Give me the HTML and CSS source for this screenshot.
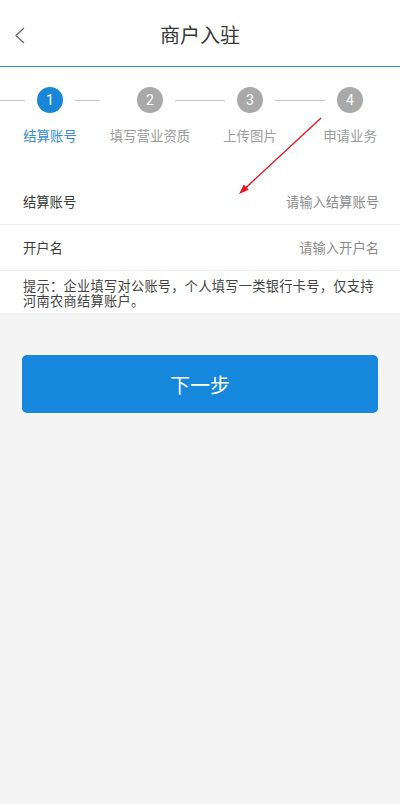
FILE: index.html
```html
<!DOCTYPE html>
<html lang="zh-CN">
<head>
<meta charset="utf-8">
<title>商户入驻</title>
<link rel="stylesheet" href="styles.css">
</head>
<body>
<div class="page">
  <header class="header">
    <svg class="back" width="20" height="20" viewBox="0 0 20 20"><polyline points="13,3 5,10.5 13,18" fill="none" stroke="#666" stroke-width="1.2"/></svg>
    <h1 class="title">商户入驻</h1>
  </header>
  <section class="card">
    <div class="steps">
      <div class="step active">
        <div class="track"><span class="line"></span><span class="dot">1</span><span class="line"></span></div>
        <div class="label">结算账号</div>
      </div>
      <div class="step">
        <div class="track"><span class="line off"></span><span class="dot">2</span><span class="line"></span></div>
        <div class="label">填写营业资质</div>
      </div>
      <div class="step">
        <div class="track"><span class="line"></span><span class="dot">3</span><span class="line"></span></div>
        <div class="label">上传图片</div>
      </div>
      <div class="step">
        <div class="track"><span class="line"></span><span class="dot">4</span><span class="line off"></span></div>
        <div class="label">申请业务</div>
      </div>
    </div>
    <div class="row"><span class="key">结算账号</span><span class="ph">请输入结算账号</span></div>
    <div class="row"><span class="key">开户名</span><span class="ph">请输入开户名</span></div>
    <p class="hint">提示：企业填写对公账号，个人填写一类银行卡号，仅支持河南农商结算账户。</p>
  </section>
  <div class="actions"><button class="next">下一步</button></div>
  <svg class="arrow" width="400" height="804" viewBox="0 0 400 804"><line x1="321" y1="118" x2="245" y2="188.5" stroke="#e8141c" stroke-width="1.4"/><polygon points="239,194 248.7,189.8 243.9,184.6" fill="#e8141c"/></svg>
</div>
</body>
</html>
```
FILE: styles.css
```css
html, body {
  margin: 0;
  padding: 0;
  background: #f4f4f4;
  font-family: "Noto Sans CJK SC", "Noto Sans", sans-serif;
}
.page {
  position: relative;
  width: 400px;
  min-height: 804px;
}
.header {
  height: 66px;
  background: #fff;
  border-bottom: 1px solid #2b8fd0;
  display: flex;
  align-items: center;
  justify-content: center;
  position: relative;
}
.back {
  position: absolute;
  left: 11px;
  top: 25px;
}
.title {
  margin: 0;
  font-size: 20px;
  font-weight: normal;
  color: #383838;
  line-height: 24px;
  padding-top: 4px;
}
.card {
  background: #fff;
}
.steps {
  display: flex;
  padding: 20px 0 34px;
}
.step {
  width: 100px;
  display: flex;
  flex-direction: column;
  align-items: center;
}
.track {
  width: 100px;
  display: flex;
  align-items: center;
  height: 26px;
}
.line {
  width: 25px;
  height: 1px;
  background: #c8c8c8;
}
.line.off {
  visibility: hidden;
}
.dot {
  width: 26px;
  height: 26px;
  margin: 0 12px;
  border-radius: 50%;
  background: #a9a9a9;
  color: #fff;
  font-size: 14px;
  line-height: 26px;
  text-align: center;
  font-family: "Roboto", sans-serif;
}
.label {
  margin-top: 12px;
  font-size: 13.4px;
  line-height: 20px;
  color: #9d9d9d;
  white-space: nowrap;
}
.step.active .dot {
  background: #1a86d8;
}
.step.active .label {
  color: #3a8fd0;
}
.row {
  height: 45px;
  border-bottom: 1px solid #ececec;
  display: flex;
  align-items: center;
  justify-content: space-between;
  padding: 0 21px 0 23px;
  font-size: 13.3px;
}
.key {
  color: #3a3a3a;
}
.ph {
  color: #8c8c8c;
}
.hint {
  margin: 0;
  padding: 7px 18px 5px 23px;
  font-size: 13.2px;
  line-height: 15px;
  letter-spacing: 0.3px;
  color: #444;
}
.actions {
  padding: 42px 22px 0;
}
.next {
  width: 100%;
  height: 58px;
  border: none;
  border-radius: 5px;
  background: #1587dc;
  color: #fff;
  font-size: 20px;
  font-family: "Noto Sans CJK SC", sans-serif;
  padding: 0;
}
.arrow {
  position: absolute;
  left: 0;
  top: 0;
  pointer-events: none;
}
```
